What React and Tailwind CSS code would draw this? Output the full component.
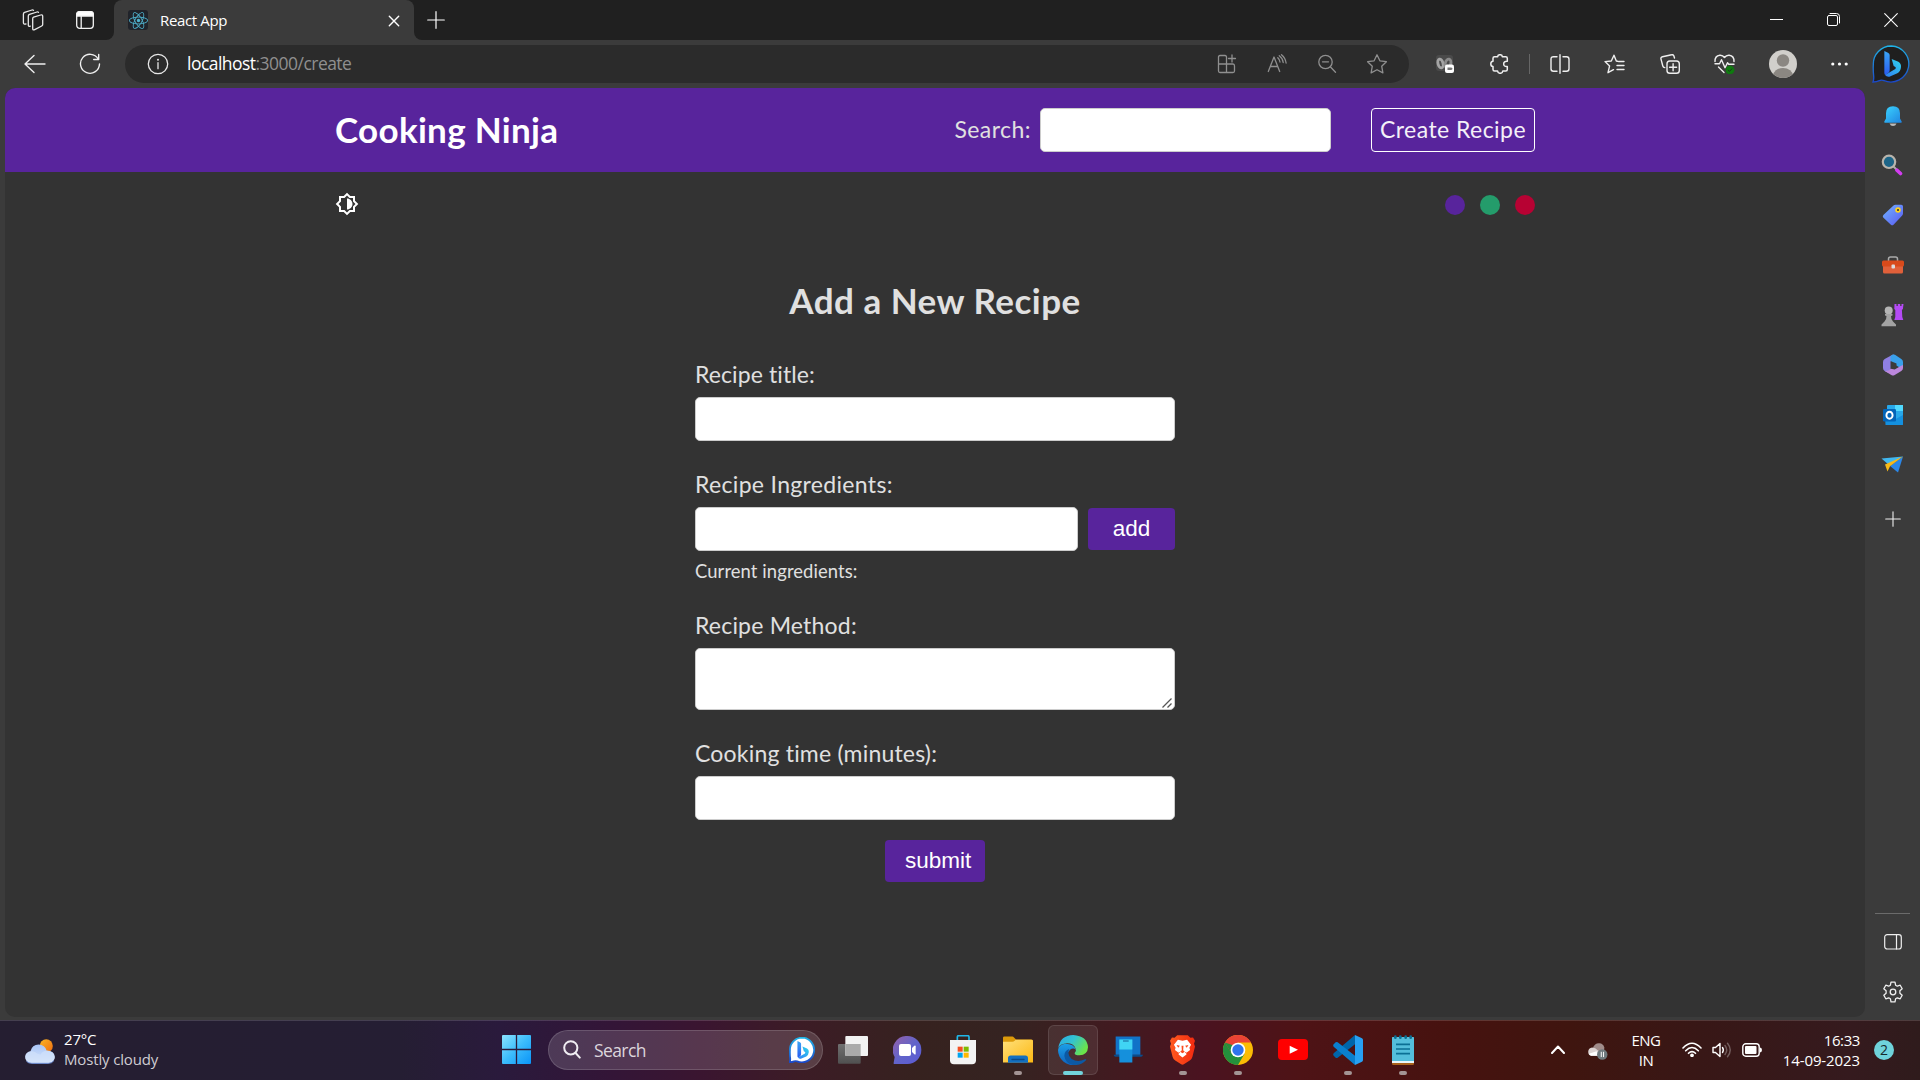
import React from "react";
import { FaReact } from "react-icons/fa";
import { MdOutlineBrightness6 } from "react-icons/md";

/* Line icon on a transparent canvas; sizes are given by Tailwind classes. */
function Line({ box, className, sw = 1.3, children }) {
  return (
    <svg viewBox={box} className={className} fill="none" stroke="currentColor" strokeWidth={sw} strokeLinecap="round" strokeLinejoin="round">
      {children}
    </svg>
  );
}

function Cell({ className = "w-[55px]", children }) {
  return <div className={`flex h-full shrink-0 items-center justify-center ${className}`}>{children}</div>;
}

function SideCell({ className = "h-[50px]", children }) {
  return <div className={`flex w-full shrink-0 items-center justify-center ${className}`}>{children}</div>;
}

/* ---------- Browser tab strip ---------- */

function TabStrip() {
  return (
    <div className="flex h-10 w-full items-center bg-[#202020] text-[#e8e8e8]">
      <Cell className="w-[65px]">
        <Line box="0 0 22 22" className="h-[22px] w-[22px]">
          <path d="M11.6 8.2 18.7 6q2-.6 2 1.3v8.2q0 1-1 1.5l-7 3.6q-2 1-2-1V9.6q0-1.1.9-1.4z" />
          <path d="M8.3 17.2q-2 .5-2-1.3V7q0-1.3 1.2-1.7L15 3q1-.3 1.5.3" />
          <path d="M4 15q-2.6.7-2.6-1.5V5q0-1.3 1.2-1.7L10 1q1-.3 1.5.3" />
        </Line>
      </Cell>
      <Cell className="w-[39px]">
        <svg viewBox="0 0 18 18" className="h-[18px] w-[18px]" fill="none" stroke="#f4f4f4" strokeWidth="1.3">
          <rect x=".7" y=".7" width="16.6" height="16.6" rx="3" />
          <path d="M.7 5V3.5Q.7.7 3.5.7h11q2.8 0 2.8 2.8V5z" fill="#fff" />
          <path d="M5.2 5v12.3" />
        </svg>
      </Cell>
      <div className="h-full w-[10px] bg-[#3b3b3b]">
        <div className="h-full w-full rounded-br-[8px] bg-[#202020]" />
      </div>
      <div className="flex h-full w-[300px] items-center rounded-t-[8px] bg-[#3b3b3b] pr-[14px] pl-[14px]">
        <div className="flex h-5 w-5 items-center justify-center rounded-[3px] bg-[#20232a]">
          <FaReact className="h-[19px] w-[19px] text-[#4fb3cf]" />
        </div>
        <span className="ml-[12px] pb-px text-[15px] leading-5 tracking-[-0.35px] text-white">React App</span>
        <Line box="0 0 12 12" className="mt-px ml-auto h-3 w-3 text-white" sw={1.4}>
          <path d="M1.3 1.3l9.4 9.4M10.7 1.3l-9.4 9.4" />
        </Line>
      </div>
      <div className="h-full w-[8px] bg-[#3b3b3b]">
        <div className="h-full w-full rounded-bl-[8px] bg-[#202020]" />
      </div>
      <Cell className="w-[27px]">
        <Line box="0 0 18 18" className="h-[18px] w-[18px] text-white" sw={1.2}>
          <path d="M9 .7v16.6M.7 9h16.6" />
        </Line>
      </Cell>
      <div className="ml-auto flex h-full pb-px text-white">
        <Cell className="w-[57px]">
          <div className="h-px w-[13px] bg-white" />
        </Cell>
        <Cell className="w-[57px]">
          <Line box="0 0 13 13" className="h-[13px] w-[13px]" sw={1}>
            <rect x=".5" y="2.5" width="10" height="10" rx="1.5" />
            <path d="M3 .5h6.500q3 0 3 3V10" />
          </Line>
        </Cell>
        <Cell className="w-[58px]">
          <Line box="0 0 14 14" className="h-[14px] w-[14px]" sw={1.1}>
            <path d="M.7.7l12.6 12.6M13.3.7L.7 13.3" />
          </Line>
        </Cell>
      </div>
    </div>
  );
}

/* ---------- Toolbar with address field ---------- */

function BingBubble({ className, light = false }) {
  const id = light ? "bl" : "bd";
  return (
    <svg viewBox="0 0 114 114" className={className}>
      <defs>
        <linearGradient id={id + "a"} x1="0" y1="0" x2="0" y2="1">
          <stop offset="0" stopColor="#1fb4e8" />
          <stop offset="1" stopColor="#1b48c8" />
        </linearGradient>
        <linearGradient id={id + "b"} x1="0" y1="0" x2="0" y2="1">
          <stop offset="0" stopColor="#3aa6f5" />
          <stop offset="1" stopColor="#2a5cf0" />
        </linearGradient>
        <linearGradient id={id + "c"} x1="0" y1="1" x2="1" y2="0">
          <stop offset="0" stopColor="#2f7df6" />
          <stop offset="1" stopColor="#2fd6ea" />
        </linearGradient>
      </defs>
      <path d="M58 3a54 54 0 1 1-22 104q-8-3-14 0-8 4-19 4 3-8 2-18-2-18-1-34A54 54 0 0 1 58 3z" fill={light ? "#fff" : "#1f1f1f"} stroke={`url(#${id}a)`} strokeWidth={light ? 8 : 4} />
      <path d="M37 18l11 5q5 2 5 7v46q0 6-5 9l-8 5q-3-2-3-6z" fill={`url(#${id}b)`} />
      <path d="M59 42l20 8q9 5 8 16-1 13-11 19L52 95q-8 1-13-5l31-18q4-4-1-7l-4-2z" fill={`url(#${id}c)`} />
    </svg>
  );
}

function AddressField() {
  return (
    <div className="flex h-[38px] w-[1284px] shrink-0 items-center rounded-full bg-[#2b2b2b] pr-[7px] pl-[22px] text-[#8f8f8f]">
      <Line box="0 0 22 22" className="h-[22px] w-[22px] text-[#e8e8e8]" sw={1.3}>
        <circle cx="11" cy="11" r="9.7" />
        <path d="M11 9.7v6" />
        <circle cx="11" cy="6.7" r=".4" fill="currentColor" />
      </Line>
      <span className="ml-[18px] pb-[2px] text-[17.5px] leading-6 tracking-[-0.53px]">
        <span className="text-white">localhost</span>:3000/create
      </span>
      <div className="ml-auto flex h-full">
        <Cell className="w-[50px]">
          <Line box="0 0 20 20" className="h-5 w-5">
            <path d="M9.500 10V3q0-1.500-1.500-1.500H3Q1.500 1.500 1.500 3v14q0 1.500 1.500 1.500h13q1.500 0 1.500-1.500v-5q0-2-1.500-2H1.500M9.500 10v8.500M15 1v7M11.500 4.500h7" />
          </Line>
        </Cell>
        <Cell className="w-[50px]">
          <Line box="0 0 20 20" className="h-5 w-5">
            <path d="M1.300 17.500L7 3l5.700 14.500M3.200 12.500h7.600M10.800 3.700q1.900 1.700 2.200 4.300" />
            <path d="M12.300 1.700q3.300 2.400 3.900 6.800M14.500.7q4 3.300 4.600 8.300" />
          </Line>
        </Cell>
        <Cell className="w-[50px]">
          <Line box="0 0 20 20" className="h-5 w-5">
            <circle cx="8.500" cy="8" r="6.700" />
            <path d="M13.300 12.700l5.200 5.500M5.500 7.800h6" />
          </Line>
        </Cell>
        <Cell className="w-[50px]">
          <Line box="0 0 22 22" className="h-[22px] w-[22px]">
            <path d="M11 1.800l2.900 6 6.500.9-4.700 4.500 1.200 6.700L11 16.700l-5.900 3.200 1.200-6.700L1.600 8.700l6.500-.9z" />
          </Line>
        </Cell>
      </div>
    </div>
  );
}

function Toolbar() {
  return (
    <div className="flex h-12 w-full items-center text-[#efefef]">
      <Cell className="ml-[17px] w-[36px]">
        <Line box="0 0 22 20" className="h-5 w-[22px]" sw={1.4}>
          <path d="M1 10h20M10 1.500L1 10l9 8.500" />
        </Line>
      </Cell>
      <Cell className="w-[74px]">
        <Line box="0 0 22 22" className="h-[22px] w-[22px]" sw={1.4}>
          <path d="M19.200 6A9.500 9.500 0 1 0 20.500 11M19.700 1.500V6.500h-5" />
        </Line>
      </Cell>
      <div className="-ml-[2px] flex h-full items-center">
        <AddressField />
      </div>
      <Cell className="ml-2 w-[55px]">
        <svg viewBox="0 0 18 18" className="h-[18px] w-[18px]">
          <rect width="17" height="16" rx="3" fill="#4a4a4a" />
          <ellipse cx="4.500" cy="8.500" rx="2.500" ry="4.500" fill="none" stroke="#a5a5a5" strokeWidth="2.800" transform="rotate(-15 4.500 8.500)" />
          <ellipse cx="12" cy="8.500" rx="2.800" ry="4.500" fill="none" stroke="#8b8b8b" strokeWidth="2.800" transform="rotate(15 12 8.500)" />
          <rect x="9" y="9.500" width="9" height="8.500" rx="2" fill="#fff" />
          <path d="M11.500 12.500h3q2 0 2 1.300t-2 1.300h-3z" fill="#777" />
        </svg>
      </Cell>
      <Cell>
        <Line box="0 0 20 20" className="h-5 w-5" sw={1.5}>
          <path d="M4.500 2.800h3.200q0-2.100 2.300-2.100t2.300 2.100h3.500q1.500 0 1.500 1.500v3q-3.600-.3-3.600 2.600t3.600 2.600v3q0 1.500-1.500 1.500h-3q-.2 2.300-2.600 2.300T7.600 17H4.500Q3 17 3 15.500v-3Q.8 12.300.8 9.900T3 7.300v-3q0-1.500 1.500-1.500z" />
        </Line>
      </Cell>
      <Cell className="w-[5px]">
        <div className="h-5 w-px bg-[#666]" />
      </Cell>
      <Cell>
        <Line box="0 0 20 20" className="h-5 w-5" sw={1.4}>
          <path d="M10 .7v18.600M7 2.700H3.500Q1 2.700 1 5.200v9.600q0 2.500 2.500 2.500H7M13 2.700h3.500Q19 2.700 19 5.200v9.600q0 2.500-2.500 2.500H13" />
        </Line>
      </Cell>
      <Cell>
        <Line box="0 0 21 20" className="h-5 w-[21px]" sw={1.4}>
          <path d="M13.500 7.300L12.300 7 10 1.200 7.300 7 1 7.600l4.600 4.300L4 18.700l5.500-3M14.500 7.500H20M13 11.500h7M13 15.500h7" />
        </Line>
      </Cell>
      <Cell>
        <Line box="0 0 20 20" className="h-5 w-5" sw={1.4}>
          <rect x="7" y="7" width="12.3" height="12.3" rx="2.8" />
          <path d="M13.100 9.700v7M9.600 13.200h7M14.500 4l-.6-2q-.6-1.700-2.300-1.200L2.500 2.700Q.5 3.200 1 5.200L2.800 12q.4 1.500 2 1.600" />
        </Line>
      </Cell>
      <Cell>
        <Line box="0 0 21 20" className="h-5 w-[21px]" sw={1.4}>
          <path d="M1 7.500Q.8 1.800 5.800 1.200q3-.2 4.700 2.300Q12.200 1 15.200 1.200 20.200 1.800 20 7.500M1 9.700h4.500l2-4 3.500 8 2.500-5 1.200 1.500H20M4.500 13l5.500 5.500" />
          <circle cx="16" cy="16" r="4" fill="#0f7b0f" stroke="#0f7b0f" strokeWidth=".8" />
          <path d="M14.200 16.100l1.300 1.300 2.400-2.600" stroke="#1c3a1c" strokeWidth="1" />
        </Line>
      </Cell>
      <Cell className="w-[61px]">
        <svg viewBox="0 0 28 28" className="h-7 w-7 rounded-full">
          <rect width="28" height="28" fill="#d1cfcb" />
          <circle cx="14" cy="10.500" r="6.200" fill="#8b8782" />
          <ellipse cx="14" cy="26" rx="10" ry="8" fill="#8b8782" />
        </svg>
      </Cell>
      <Cell className="w-[53px]">
        <svg viewBox="0 0 17 4" className="h-1 w-[17px] fill-white">
          <circle cx="1.800" cy="2" r="1.600" />
          <circle cx="8.500" cy="2" r="1.600" />
          <circle cx="15.200" cy="2" r="1.600" />
        </svg>
      </Cell>
      <Cell className="w-[50px]">
        <BingBubble className="h-[38px] w-[38px]" />
      </Cell>
    </div>
  );
}

/* ---------- Web page ---------- */

const field = "block rounded-[5px] border border-[#ccc] bg-white px-2 text-[22px] text-[#333] outline-none";

function RecipePage() {
  return (
    <div className="h-[929px] w-[1860px] overflow-hidden rounded-[10px] bg-[#333] font-['Lato',sans-serif] text-[23px] leading-[27px] text-[#e0e0e0]">
      <header className="h-[84px] bg-[#58249c]">
        <nav className="mx-auto flex h-full w-[1200px] items-center">
          <h1 className="pb-[3px] text-[35px] leading-[42px] font-bold tracking-[0.3px] text-white">Cooking Ninja</h1>
          <label className="ml-auto pb-px tracking-[0.45px]">Search:</label>
          <input className={`${field} ml-[9px] h-11 w-[291px]`} />
          <a className="ml-10 flex h-11 w-[164px] items-center justify-center rounded-[4px] border border-white pb-px tracking-[0.45px] whitespace-nowrap text-[#f4f0f8]">
            Create Recipe
          </a>
        </nav>
      </header>
      <div className="mx-auto mt-5 flex h-[25px] w-[1200px] items-center justify-between">
        <MdOutlineBrightness6 className="-mt-px h-6 w-6 text-white" />
        <div className="flex gap-[15px] pt-px">
          <div className="h-5 w-5 rounded-full bg-[#58249c]" />
          <div className="h-5 w-5 rounded-full bg-[#249c6b]" />
          <div className="h-5 w-5 rounded-full bg-[#b70233]" />
        </div>
      </div>
      <form className="mx-auto mt-[62px] flex w-[480px] flex-col">
        <h2 className="text-center text-[35px] leading-[42px] font-bold tracking-[0.5px] whitespace-nowrap">Add a New Recipe</h2>
        <label className="mt-[40px] tracking-[0.1px]">Recipe title:</label>
        <input className={`${field} mt-[9px] h-11 w-full`} />
        <label className="mt-[30px] tracking-[0.33px]">Recipe Ingredients:</label>
        <div className="mt-[9px] flex items-center gap-[10px]">
          <input className={`${field} h-11 w-[383px]`} />
          <button type="button" className="h-[42px] w-[87px] rounded-[4px] bg-[#58249c] pb-[2px] font-['Liberation_Sans',sans-serif] text-[22.5px] text-white">
            add
          </button>
        </div>
        <p className="mt-[9px] text-[18.4px] leading-[22px] tracking-[0.1px]">Current ingredients:</p>
        <label className="mt-[30px] tracking-[0.2px]">Recipe Method:</label>
        <div className="relative mt-[9px]">
          <textarea className={`${field} h-[62px] w-full resize-none`} />
          <svg viewBox="0 0 12 12" className="absolute right-[2px] bottom-[1px] h-3 w-3" fill="none" stroke="#555" strokeWidth="1.3">
            <path d="M1.500 10.500l9-9M6.500 10.500l4-4" />
          </svg>
        </div>
        <label className="mt-[30px] tracking-[0.2px]">Cooking time (minutes):</label>
        <input className={`${field} mt-[9px] h-11 w-full`} />
        <button type="button" className="mx-auto mt-5 h-[42px] w-[100px] rounded-[4px] bg-[#58249c] pb-[2px] pl-5 text-left font-['Liberation_Sans',sans-serif] text-[22.5px] text-white">
          submit
        </button>
      </form>
    </div>
  );
}

/* ---------- Browser sidebar ---------- */

function SideIcons() {
  return (
    <>
      <SideCell>
        <svg viewBox="0 0 22 22" className="mt-px h-[22px] w-[22px]">
          <defs>
            <linearGradient id="bell" x1="0" y1="0" x2="1" y2="1">
              <stop offset="0" stopColor="#3bd5ff" />
              <stop offset="1" stopColor="#1f83e0" />
            </linearGradient>
          </defs>
          <path d="M7.500 18.500h7q-1 2.500-3.500 2.500t-3.500-2.500z" fill="#bbb" />
          <path d="M11 1.200q7 0 7 7v5.300l1.700 3q.4 1.200-.8 1.200H3.100q-1.200 0-.8-1.200l1.700-3V8.200q0-7 7-7z" fill="url(#bell)" />
        </svg>
      </SideCell>
      <SideCell>
        <svg viewBox="0 0 22 22" className="mr-px h-[22px] w-[22px]">
          <path d="M12.500 12.500l3 3" stroke="#aaa" strokeWidth="2" />
          <path d="M16 16.200l3.500 3.300" stroke="#d23cf0" strokeWidth="3.600" strokeLinecap="round" />
          <circle cx="8" cy="7.800" r="6.200" fill="#1d6588" stroke="#b9b4ac" strokeWidth="2.200" />
        </svg>
      </SideCell>
      <SideCell>
        <svg viewBox="0 0 22 22" className="h-[22px] w-[22px]">
          <defs>
            <linearGradient id="tag" x1="0" y1="0" x2="1" y2="1">
              <stop offset="0" stopColor="#70b5ff" />
              <stop offset="1" stopColor="#5a58f2" />
            </linearGradient>
          </defs>
          <path d="M11.500 1.500q.8-.7 2-.7h5.800q1.700 0 1.700 1.700v7q0 1.200-.8 2l-8.700 9.200q-1.300 1.200-2.600 0L1.200 13.400q-1-1.300.2-2.500z" fill="url(#tag)" />
          <circle cx="16" cy="6" r="2.800" fill="#ffd21f" />
          <circle cx="16" cy="6" r="1.100" fill="#333" />
        </svg>
      </SideCell>
      <SideCell>
        <svg viewBox="0 0 22 20" className="h-5 w-[22px]">
          <path d="M6.500 6V4q0-2 2-2h5q2 0 2 2v2" fill="none" stroke="#aaa" strokeWidth="1.500" />
          <rect x="1" y="9" width="20" height="9.500" rx="1.500" fill="#e0603a" />
          <rect x="0" y="5.500" width="22" height="6" rx="1.500" fill="#d84a1b" />
          <rect x="9.500" y="9.500" width="3.500" height="4" rx="1" fill="#ddd" />
        </svg>
      </SideCell>
      <SideCell>
        <svg viewBox="0 0 23 24" className="h-6 w-[23px]">
          <path d="M13.500 1h2v2h1.300V1h2.400v2h1.300V1h2l-.6 5-1 1 .4 7 1 3h-9l1-3V7l-1-1z" fill="#b44af5" />
          <circle cx="7.700" cy="7.500" r="4" fill="#b5b5b5" />
          <path d="M4 11h7.500v1.500l-1.500.5q0 4 2 5.500l3 3v1.800H.5v-1.800l3-3q2-1.500 2-5.500L4 12.500z" fill="#a3a3a3" />
        </svg>
      </SideCell>
      <SideCell>
        <svg viewBox="0 0 22 22" className="h-[22px] w-[22px]">
          <path d="M11 .5L2.700 5Q1 6 1 8v6q0 2 1.700 3l2.800 1.500q3-.5 3-4V8q0-1.200 1-1.800L13 4V1.500z" fill="#8f80e4" />
          <path d="M11 .5q1-.3 2 .2L19.300 5Q21 6 21 8v6l-3.500-.5-3-2V9.500L8.500 7V2z" fill="#39a0ea" />
          <path d="M21 11v3q0 2-1.700 3l-7 4.200q-1.300.7-2.600 0L2.700 17q3.800.5 6-2.200l4 .7 6-3.500z" fill="#bb87dc" />
        </svg>
      </SideCell>
      <SideCell>
        <svg viewBox="0 0 22 22" className="h-[22px] w-[22px]">
          <rect x="5" y="1" width="16" height="18" rx="1" fill="#28a8ea" />
          <path d="M13 1h8v6h-8z" fill="#50d9ff" />
          <path d="M3 11l9 5 9-5v9.500q0 .5-.5.5h-17z" fill="#1490df" />
          <rect x="1" y="5" width="13" height="12.500" rx="1.200" fill="#0364b8" />
          <ellipse cx="7.500" cy="11.200" rx="3.100" ry="3.500" fill="none" stroke="#fff" strokeWidth="1.900" />
        </svg>
      </SideCell>
      <SideCell>
        <svg viewBox="0 0 23 18" className="h-[18px] w-[23px]">
          <path d="M.5 2.500L22 .5 8 9z" fill="#41b8f0" />
          <path d="M22 .5L17 16.500 9 10z" fill="#2b87e8" />
          <path d="M22 .5L4 8.500l2.500 7 2.500-5.300z" fill="#f8b917" />
        </svg>
      </SideCell>
    </>
  );
}

function Sidebar() {
  return (
    <aside className="flex h-[932px] w-[55px] flex-col items-center pt-[2px] text-[#efefef]">
      <SideIcons />
      <SideCell className="h-[58px]">
        <Line box="0 0 16 16" className="h-4 w-4" sw={1.1}>
          <path d="M8 .7v14.600M.7 8h14.600" />
        </Line>
      </SideCell>
      <div className="mt-auto h-px w-[35px] bg-[#6b6b6b]" />
      <SideCell className="mt-[3px] h-[50px]">
        <Line box="0 0 18 16" className="h-4 w-[18px]" sw={1.2}>
          <rect x=".7" y=".7" width="16.600" height="14.300" rx="2.500" />
          <path d="M12.500 1v14" />
        </Line>
      </SideCell>
      <SideCell className="mb-[3px] h-[50px]">
        <Line box="0 0 22 22" className="h-[22px] w-[22px]" sw={1.3}>
          <path d="M9 1.200h4l.6 3 1.700 1 2.900-1 2 3.500-2.300 2v2.600l2.300 2-2 3.500-2.900-1-1.700 1-.6 3H9l-.6-3-1.700-1-2.900 1-2-3.500 2.300-2V9.700l-2.300-2 2-3.500 2.900 1 1.700-1z" />
          <circle cx="11" cy="11" r="2.800" />
        </Line>
      </SideCell>
    </aside>
  );
}

/* ---------- Taskbar ---------- */

function TaskIcon({ active = false, running = false, children }) {
  return (
    <div className="flex h-full w-[55px] items-center justify-center">
      <div className={`relative flex h-[50px] w-[50px] items-center justify-center rounded-[6px] ${active ? "border border-white/10 bg-white/8" : ""}`}>
        {children}
        {running && <div className="absolute bottom-0 left-1/2 h-1 w-2 -translate-x-1/2 rounded-full bg-[#a39494]" />}
        {active && <div className="absolute -bottom-px left-1/2 h-1 w-5 -translate-x-1/2 rounded-full bg-[#72d3dc]" />}
      </div>
    </div>
  );
}

function TaskIcons() {
  return (
    <>
      <TaskIcon>
        <svg viewBox="0 0 90 84" className="h-7 w-[30px]">
          <defs>
            <linearGradient id="tv" x1="0" y1="0" x2="0" y2="1">
              <stop offset="0" stopColor="#707070" />
              <stop offset="1" stopColor="#505050" />
            </linearGradient>
          </defs>
          <rect x="0" y="24" width="68" height="59" rx="3" fill="url(#tv)" />
          <rect x="22" y="0" width="68" height="60" rx="3" fill="#f2f2f2" />
          <path d="M22 24h46v36H25q-3 0-3-3z" fill="#aaa" />
        </svg>
      </TaskIcon>
      <TaskIcon>
        <svg viewBox="0 0 87 84" className="h-7 w-[29px]">
          <defs>
            <linearGradient id="chat" x1="0" y1="0" x2="1" y2="1">
              <stop offset="0" stopColor="#9660a8" />
              <stop offset=".5" stopColor="#6264c9" />
              <stop offset="1" stopColor="#5a5ad6" />
            </linearGradient>
          </defs>
          <path d="M43 0a42 42 0 1 1 0 84H5q-4 0-3-4l3-17A42 42 0 0 1 43 0z" fill="url(#chat)" />
          <rect x="18" y="24" width="36" height="36" rx="6" fill="#fff" />
          <path d="M57 36l7-7q4-2 4 2v22q0 4-4 2l-7-7z" fill="#fff" />
        </svg>
      </TaskIcon>
      <TaskIcon>
        <svg viewBox="0 0 90 90" className="h-[30px] w-[30px]">
          <path d="M28 18V6q0-4 4-4h27q4 0 4 4v12" fill="none" stroke="#20b7e8" strokeWidth="5" />
          <path d="M6 15h78v61q0 12-12 12H18Q6 88 6 76z" fill="#f3f3f3" />
          <path d="M29 35h15v15H29z" fill="#f25022" />
          <path d="M47 35h15v15H47z" fill="#7fba00" />
          <path d="M29 53h15v15H29z" fill="#00a4ef" />
          <path d="M47 53h15v15H47z" fill="#ffb900" />
        </svg>
      </TaskIcon>
      <TaskIcon running>
        <svg viewBox="0 0 90 80" className="h-[27px] w-[30px]">
          <defs>
            <linearGradient id="fold" x1="0" y1="0" x2="1" y2="1">
              <stop offset="0" stopColor="#ffe07a" />
              <stop offset="1" stopColor="#fcb813" />
            </linearGradient>
          </defs>
          <path d="M0 5q0-4 4-4h24q3 0 5 3l6 6h45q6 0 6 5v20H0z" fill="#dc9a0a" />
          <path d="M0 17h28q4 0 7-3l3-3h48q4 0 4 4v64H0z" fill="url(#fold)" />
          <path d="M15 80V66q0-8 8-8h44q8 0 8 8v14z" fill="#1370c0" />
          <rect x="25" y="68" width="40" height="4" rx="2" fill="#0a4a87" />
        </svg>
      </TaskIcon>
      <TaskIcon active>
        <svg viewBox="0 0 90 90" className="h-[30px] w-[30px]">
          <defs>
            <linearGradient id="eg" x1="0" y1="0" x2="1" y2=".5">
              <stop offset="0" stopColor="#2aa9e6" />
              <stop offset=".5" stopColor="#33c3d0" />
              <stop offset="1" stopColor="#6be34a" />
            </linearGradient>
            <linearGradient id="eb" x1="0" y1="0" x2="0" y2="1">
              <stop offset="0" stopColor="#1ba0e8" />
              <stop offset="1" stopColor="#0f62bd" />
            </linearGradient>
          </defs>
          <path d="M0 45Q2 28 22 26q26 0 32 18-8-7-18 0-12 12-6 28 6 14 25 17A45 45 0 0 1 0 45z" fill="url(#eb)" />
          <path d="M34 42q-8 16 7 30 18 12 40 1 6-2 3 3-14 16-38 14-24-4-27-27 0-16 15-21z" fill="#0c59a4" />
          <path d="M1 38Q7 1 46 0q42 3 44 37-1 23-26 24-15 0-14-7 6-5 3-13-6-16-26-16Q8 26 1 38z" fill="url(#eg)" />
        </svg>
      </TaskIcon>
      <TaskIcon>
        <svg viewBox="0 0 90 80" className="h-[27px] w-[30px]">
          <path d="M8 1h74v55H8z" fill="#1173c8" />
          <path d="M2 56h88q-1 6-6 6H7q-4 0-5-6z" fill="#0a4c8c" />
          <path d="M19 10h39v69H19z" fill="#1590dc" />
          <path d="M19 10h39v30H19z" fill="#40d4f4" />
          <rect x="30" y="13" width="17" height="3" fill="#135f96" />
        </svg>
      </TaskIcon>
      <TaskIcon running>
        <svg viewBox="0 0 76 90" className="h-[30px] w-[25px]">
          <defs>
            <linearGradient id="br" x1="0" y1="0" x2="1" y2="0">
              <stop offset="0" stopColor="#ff5a1f" />
              <stop offset="1" stopColor="#f22a10" />
            </linearGradient>
          </defs>
          <path d="M22 0h32l8 8 8-1 6 10-3 9 3 8-8 32q-2 7-8 11L42 88q-4 3-8 0L16 77q-6-4-8-11L0 34l3-8-3-9L6 7l8 1z" fill="url(#br)" />
          <path d="M24 14l14 3 14-3 12 15-5 9 2 7-12 9 1 5-12 9-12-9 1-5-12-9 2-7-5-9z" fill="#fff" />
          <path d="M20 30l10 2-5 6zM56 30l-10 2 5 6zM35 32h6l-1 14 5 4-7 5-7-5 5-4zM26 50l5 3-4 2zM50 50l-5 3 4 2z" fill="#fb4a1e" />
        </svg>
      </TaskIcon>
      <TaskIcon running>
        <svg viewBox="0 0 90 90" className="h-[30px] w-[30px]">
          <circle cx="45" cy="45" r="45" fill="#fbbc05" />
          <path d="M45 45L6 22.500A45 45 0 0 0 45 90L64.500 56z" fill="#24903c" />
          <path d="M6 22.500A45 45 0 0 1 84 22.500H45L25.500 56z" fill="#ea4335" />
          <path d="M6 22.500L25.500 56 45 45 28 30z" fill="#24903c" />
          <circle cx="45" cy="45" r="22" fill="#fff" />
          <circle cx="45" cy="45" r="17" fill="#2f74ee" />
        </svg>
      </TaskIcon>
      <TaskIcon>
        <svg viewBox="0 0 90 63" className="h-[21px] w-[30px]">
          <rect width="90" height="63" rx="12" fill="#f00" />
          <path d="M35 20v24l25-12z" fill="#fff" />
        </svg>
      </TaskIcon>
      <TaskIcon running>
        <svg viewBox="0 0 90 90" className="h-[30px] w-[30px]">
          <path d="M66 0L2 55q-3 4 0 7l6 6q3 2 6 0l52-40z" fill="#0065a9" />
          <path d="M66 90L2 35q-3-4 0-7l6-6q3-2 6 0l52 40z" fill="#0a7fce" />
          <path d="M66 0l21 10q3 2 3 5v60q0 3-3 5L66 90z" fill="#27a0f2" />
        </svg>
      </TaskIcon>
      <TaskIcon running>
        <svg viewBox="0 0 66 90" className="h-[30px] w-[22px]">
          <path d="M0 82h66v4q0 4-4 4H4q-4 0-4-4z" fill="#a8611b" />
          <path d="M0 8h66v76H0z" fill="#eaf6fa" />
          <path d="M0 9q0-3 3-3h60q3 0 3 3v69H0z" fill="#54bedb" />
          <path d="M12 28h42M12 42h42M12 56h42" stroke="#0b6f94" strokeWidth="5" />
          <path d="M10 5v3M25 5v3M41 5v3M56 5v3" stroke="#0b6f94" strokeWidth="8" strokeLinecap="round" />
        </svg>
      </TaskIcon>
    </>
  );
}

function Tray() {
  return (
    <div className="ml-auto flex h-full items-center text-white">
      <Line box="0 0 14 9" className="h-[9px] w-[14px]" sw={2}>
        <path d="M1 8l6-6.500L13 8" />
      </Line>
      <svg viewBox="0 0 60 52" className="mt-[3px] ml-[23px] h-[17px] w-[20px]">
        <path d="M14 16Q20 0 34 1q12 1 15 12 2 13-8 16L14 22z" fill="#a08c8a" />
        <path d="M12 14q10 0 18 9l10 6-4 10H9Q0 38 0 27 1 15 12 14z" fill="#dcd4d3" />
        <path d="M2 33l24-8 8 14H9q-5-1-7-6z" fill="#fff" />
        <circle cx="43" cy="35" r="16" fill="#6f7a7e" />
        <path d="M40 27v16M47 27v16" stroke="#fff" strokeWidth="3" />
      </svg>
      <div className="ml-[23px] w-[30px] text-center leading-5 tracking-[-0.5px]">
        <div>ENG</div>
        <div>IN</div>
      </div>
      <Line box="0 0 20 15" className="ml-[21px] h-[15px] w-5" sw={1.6}>
        <path d="M1 6q9-9.500 18 0M3.700 8.800q6.300-6.500 12.600 0M6.500 11.300q3.500-3.500 7 0" />
        <circle cx="10" cy="13.300" r="1.100" fill="currentColor" />
      </Line>
      <Line box="0 0 20 16" className="ml-[10px] h-4 w-5" sw={1.4}>
        <path d="M1 5.500h2.500L8 1.500v13L3.500 10.500H1z" />
        <path d="M10.500 5.500q1.700 2.500 0 5" />
        <path d="M13 3.500q3.500 4.500 0 9M15.500 1.300q5.500 6.700 0 13.400" opacity=".3" />
      </Line>
      <svg viewBox="0 0 20 14" className="ml-[10px] h-[14px] w-5">
        <rect x=".8" y=".8" width="16.400" height="12.400" rx="3" fill="none" stroke="#fff" strokeWidth="1.400" />
        <rect x="3" y="3" width="11.500" height="8" rx="1" fill="#fff" />
        <path d="M18 4.500q2 .3 2 2.500t-2 2.500z" fill="#fff" />
      </svg>
      <div className="ml-[19px] w-[79px] text-right leading-5 tracking-[-0.1px] whitespace-nowrap">
        <div className="tracking-[-0.4px]">16:33</div>
        <div>14-09-2023</div>
      </div>
      <div className="mr-[26px] ml-[14px] flex h-5 w-5 items-center justify-center rounded-full bg-[#6fd3db] text-[14px] leading-5 text-[#16292b]">2</div>
    </div>
  );
}

function Taskbar() {
  return (
    <div className="flex h-[60px] w-full items-center border-t border-white/15 bg-[linear-gradient(90deg,#251e31_0px,#251e33_400px,#2a1a3c_500px,#331537_610px,#3a1530_700px,#3c1c26_800px,#36221f_920px,#352321_1010px,#421a20_1120px,#4a1320_1200px,#4e1316_1300px,#46120f_1450px,#3f150f_1570px,#381716_1700px,#351a1e_1850px,#2f1b1c_1920px)] pb-[2px] text-[15px] text-white">
      <svg viewBox="0 0 90 76" className="mt-[3px] ml-[25px] h-[25px] w-[30px]">
        <defs>
          <linearGradient id="cl" x1="0" y1="0" x2="0" y2="1">
            <stop offset="0" stopColor="#a9c5f7" />
            <stop offset="1" stopColor="#dbe8fb" />
          </linearGradient>
          <linearGradient id="sun" x1="0" y1="0" x2="1" y2="1">
            <stop offset="0" stopColor="#f9b626" />
            <stop offset="1" stopColor="#ef6c10" />
          </linearGradient>
        </defs>
        <circle cx="64" cy="21" r="20" fill="url(#sun)" />
        <path d="M20 74Q0 72 0 54q1-14 16-17 5-19 25-20 19 1 24 18 24 0 25 20-1 17-19 19z" fill="url(#cl)" />
        <path d="M46 48q7-13 22-12 20 2 22 19-1 17-19 19H20Q0 72 0 54q1-10 10-15 15-6 26 5z" fill="#d3e2fb" opacity=".65" />
        <path d="M4 68q6 6 16 6h51q10 0 16-8" fill="none" stroke="#6f8fd8" strokeWidth="3" />
      </svg>
      <div className="ml-[9px] w-[120px] pb-px leading-5 tracking-[-0.2px]">
        <div>27°C</div>
        <div className="tracking-[-0.15px] text-[#cfccd2]">Mostly cloudy</div>
      </div>
      <svg viewBox="0 0 88 88" className="ml-[318px] h-[29px] w-[29px]">
        <defs>
          <linearGradient id="win" gradientUnits="userSpaceOnUse" x1="0" y1="0" x2="88" y2="88">
            <stop offset="0" stopColor="#8be3ff" />
            <stop offset=".5" stopColor="#3cbcfb" />
            <stop offset="1" stopColor="#0a94f8" />
          </linearGradient>
        </defs>
        <path d="M3 0h39v42H0V3q0-3 3-3zM46 0h39q3 0 3 3v39H46zM0 46h42v42H3q-3 0-3-3zM46 46h42v39q0 3-3 3H46z" fill="url(#win)" />
      </svg>
      <div className="ml-[17px] flex h-10 w-[275px] items-center rounded-full border border-white/15 bg-white/15 pr-[7px] pl-[14px]">
        <Line box="0 0 18 19" className="h-[19px] w-[18px] text-[#f0edf2]" sw={2}>
          <circle cx="7.800" cy="7.800" r="6.600" />
          <path d="M12.600 13l4.200 4.600" />
        </Line>
        <span className="ml-[13px] text-[17.5px] leading-6 tracking-[-0.6px] text-[#dcd5dc]">Search</span>
        <BingBubble light className="ml-auto h-[26px] w-[26px]" />
      </div>
      <div className="ml-[2px] flex h-full">
        <TaskIcons />
      </div>
      <Tray />
    </div>
  );
}

export default function App() {
  return (
    <div className="flex h-[1080px] w-[1920px] flex-col overflow-hidden bg-[#3b3b3b] font-['Open_Sans','Noto_Sans',sans-serif]">
      <TabStrip />
      <Toolbar />
      <div className="flex h-[932px] pl-[5px]">
        <RecipePage />
        <Sidebar />
      </div>
      <Taskbar />
    </div>
  );
}
